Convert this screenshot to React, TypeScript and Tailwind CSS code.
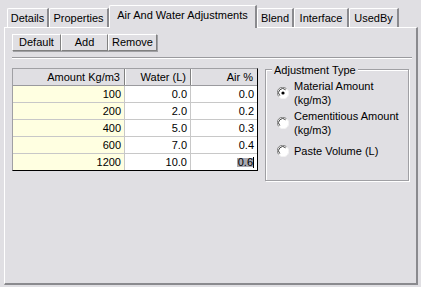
import React from "react";

function Tab({ w, label, selected }: { w: number; label: string; selected?: boolean }) {
  if (selected) {
    return (
      <div
        style={{ width: w }}
        className="relative z-10 h-[23px] bg-[#e0dfe3] border-t border-l border-white border-r-2 border-r-[#8a8a8e] rounded-tl-[2px] flex items-start justify-center pt-[4px]"
      >
        {label}
      </div>
    );
  }
  return (
    <div
      style={{ width: w }}
      className="h-[19px] mb-[1px] border-t border-l border-white border-r-2 border-r-[#8a8a8e] rounded-tl-[2px] flex items-center justify-center pt-[1px]"
    >
      {label}
    </div>
  );
}

function Btn({ w, label }: { w: number; label: string }) {
  return (
    <div
      style={{ width: w }}
      className="h-[17px] border-t border-l border-white border-r border-b border-r-[#808080] border-b-[#808080] shadow-[1px_1px_0_#a0a0a4] flex items-center justify-center"
    >
      {label}
    </div>
  );
}

function Radio({ checked }: { checked?: boolean }) {
  return (
    <svg width="12" height="12" viewBox="0 0 12 12" className="shrink-0">
      <circle cx="6" cy="6" r="5.5" fill="#ffffff" />
      <path d="M1.8 9.5 A5 5 0 0 1 9.5 1.8" fill="none" stroke="#808080" strokeWidth="1" />
      <path d="M2.8 8.6 A3.8 3.8 0 0 1 8.6 2.8" fill="none" stroke="#404040" strokeWidth="1" />
      <path d="M10.2 2.5 A5 5 0 0 1 2.5 10.2" fill="none" stroke="#f4f4f4" strokeWidth="1" />
      {checked && <circle cx="6" cy="6" r="1.6" fill="#000" />}
    </svg>
  );
}

const rows = [
  ["100", "0.0", "0.0"],
  ["200", "2.0", "0.2"],
  ["400", "5.0", "0.3"],
  ["600", "7.0", "0.4"],
  ["1200", "10.0", "0.6"],
];

export default function App() {
  return (
    <div className="w-[421px] h-[287px] bg-[#e0dfe3] font-['Liberation_Sans',Arial,sans-serif] text-[11px] text-black leading-none overflow-hidden">
      <div className="flex items-end pl-[7px] h-[28px]">
        <Tab w={42} label="Details" />
        <Tab w={60} label="Properties" />
        <Tab w={148} label="Air And Water Adjustments" selected />
        <Tab w={37} label="Blend" />
        <Tab w={55} label="Interface" />
        <Tab w={50} label="UsedBy" />
      </div>
      <div className="-mt-[1px] ml-[4px] w-[414px] h-[258px] border-t border-l border-white border-r-2 border-b-2 border-r-[#8a8a8e] border-b-[#8a8a8e] pt-[6px] pl-[7px]">
        <div className="flex">
          <Btn w={49} label="Default" />
          <Btn w={47} label="Add" />
          <Btn w={49} label="Remove" />
        </div>
        <div className="mt-[6px] w-[400px] border-t border-t-[#9a9a9e] border-b border-b-white" />
        <div className="mt-[9px] flex items-start gap-[7px]">
          {/* table */}
          <div className="w-[246px] border-t border-l border-t-[#a0a0a4] border-l-[#a0a0a4] border-r border-b border-r-black border-b-black bg-white">
            <div className="flex h-[17px] bg-[#e0dfe3] border-b border-b-[#9a9a9e]">
              <div className="w-[112px] flex items-center justify-end pr-[4px] border-r border-r-[#808080]">Amount Kg/m3</div>
              <div className="w-[66px] flex items-center justify-end pr-[4px] border-r border-r-[#808080] border-l border-l-white">Water (L)</div>
              <div className="flex-1 flex items-center justify-end pr-[4px] border-l border-l-white">Air %</div>
            </div>
            {rows.map((r, i) => (
              <div
                key={i}
                className={
                  i === rows.length - 1
                    ? "flex h-[16px]"
                    : "flex h-[17px] border-b border-b-[#c8c8c8]"
                }
              >
                <div className="w-[112px] bg-[#ffffe1] flex items-center justify-end pr-[3px] border-r border-r-[#c8c8c8]">{r[0]}</div>
                <div className="w-[66px] flex items-center justify-end pr-[3px] border-r border-r-[#c8c8c8]">{r[1]}</div>
                <div className="flex-1 flex items-center justify-end pr-[3px]">
                  {i === rows.length - 1 ? (
                    <span className="relative bg-[#a9a9b2] px-[1px] h-[9px] flex items-center leading-none">
                      {r[2]}
                      <span className="absolute right-0 top-[-1px] h-[11px] w-[1px] bg-black" />
                    </span>
                  ) : (
                    r[2]
                  )}
                </div>
              </div>
            ))}
          </div>
          {/* group box */}
          <div className="relative mt-[1px] w-[144px] h-[112px] border border-[#a0a0a4] shadow-[inset_1px_1px_0_#fff,1px_1px_0_#fff] pl-[11px] pt-[9px]">
            <span className="absolute left-[6px] top-[-6px] bg-[#e0dfe3] px-[2px] leading-[12px]">Adjustment Type</span>
            <div className="flex items-center gap-[5px] h-[28px]">
              <Radio checked />
              <div className="leading-[14px]">Material Amount<br />(kg/m3)</div>
            </div>
            <div className="mt-[2px] flex items-center gap-[5px] h-[28px]">
              <Radio />
              <div className="leading-[14px]">Cementitious Amount<br />(kg/m3)</div>
            </div>
            <div className="mt-[7px] flex items-center gap-[5px] h-[14px]">
              <Radio />
              <div className="leading-[14px]">Paste Volume (L)</div>
            </div>
          </div>
        </div>
      </div>
    </div>
  );
}
